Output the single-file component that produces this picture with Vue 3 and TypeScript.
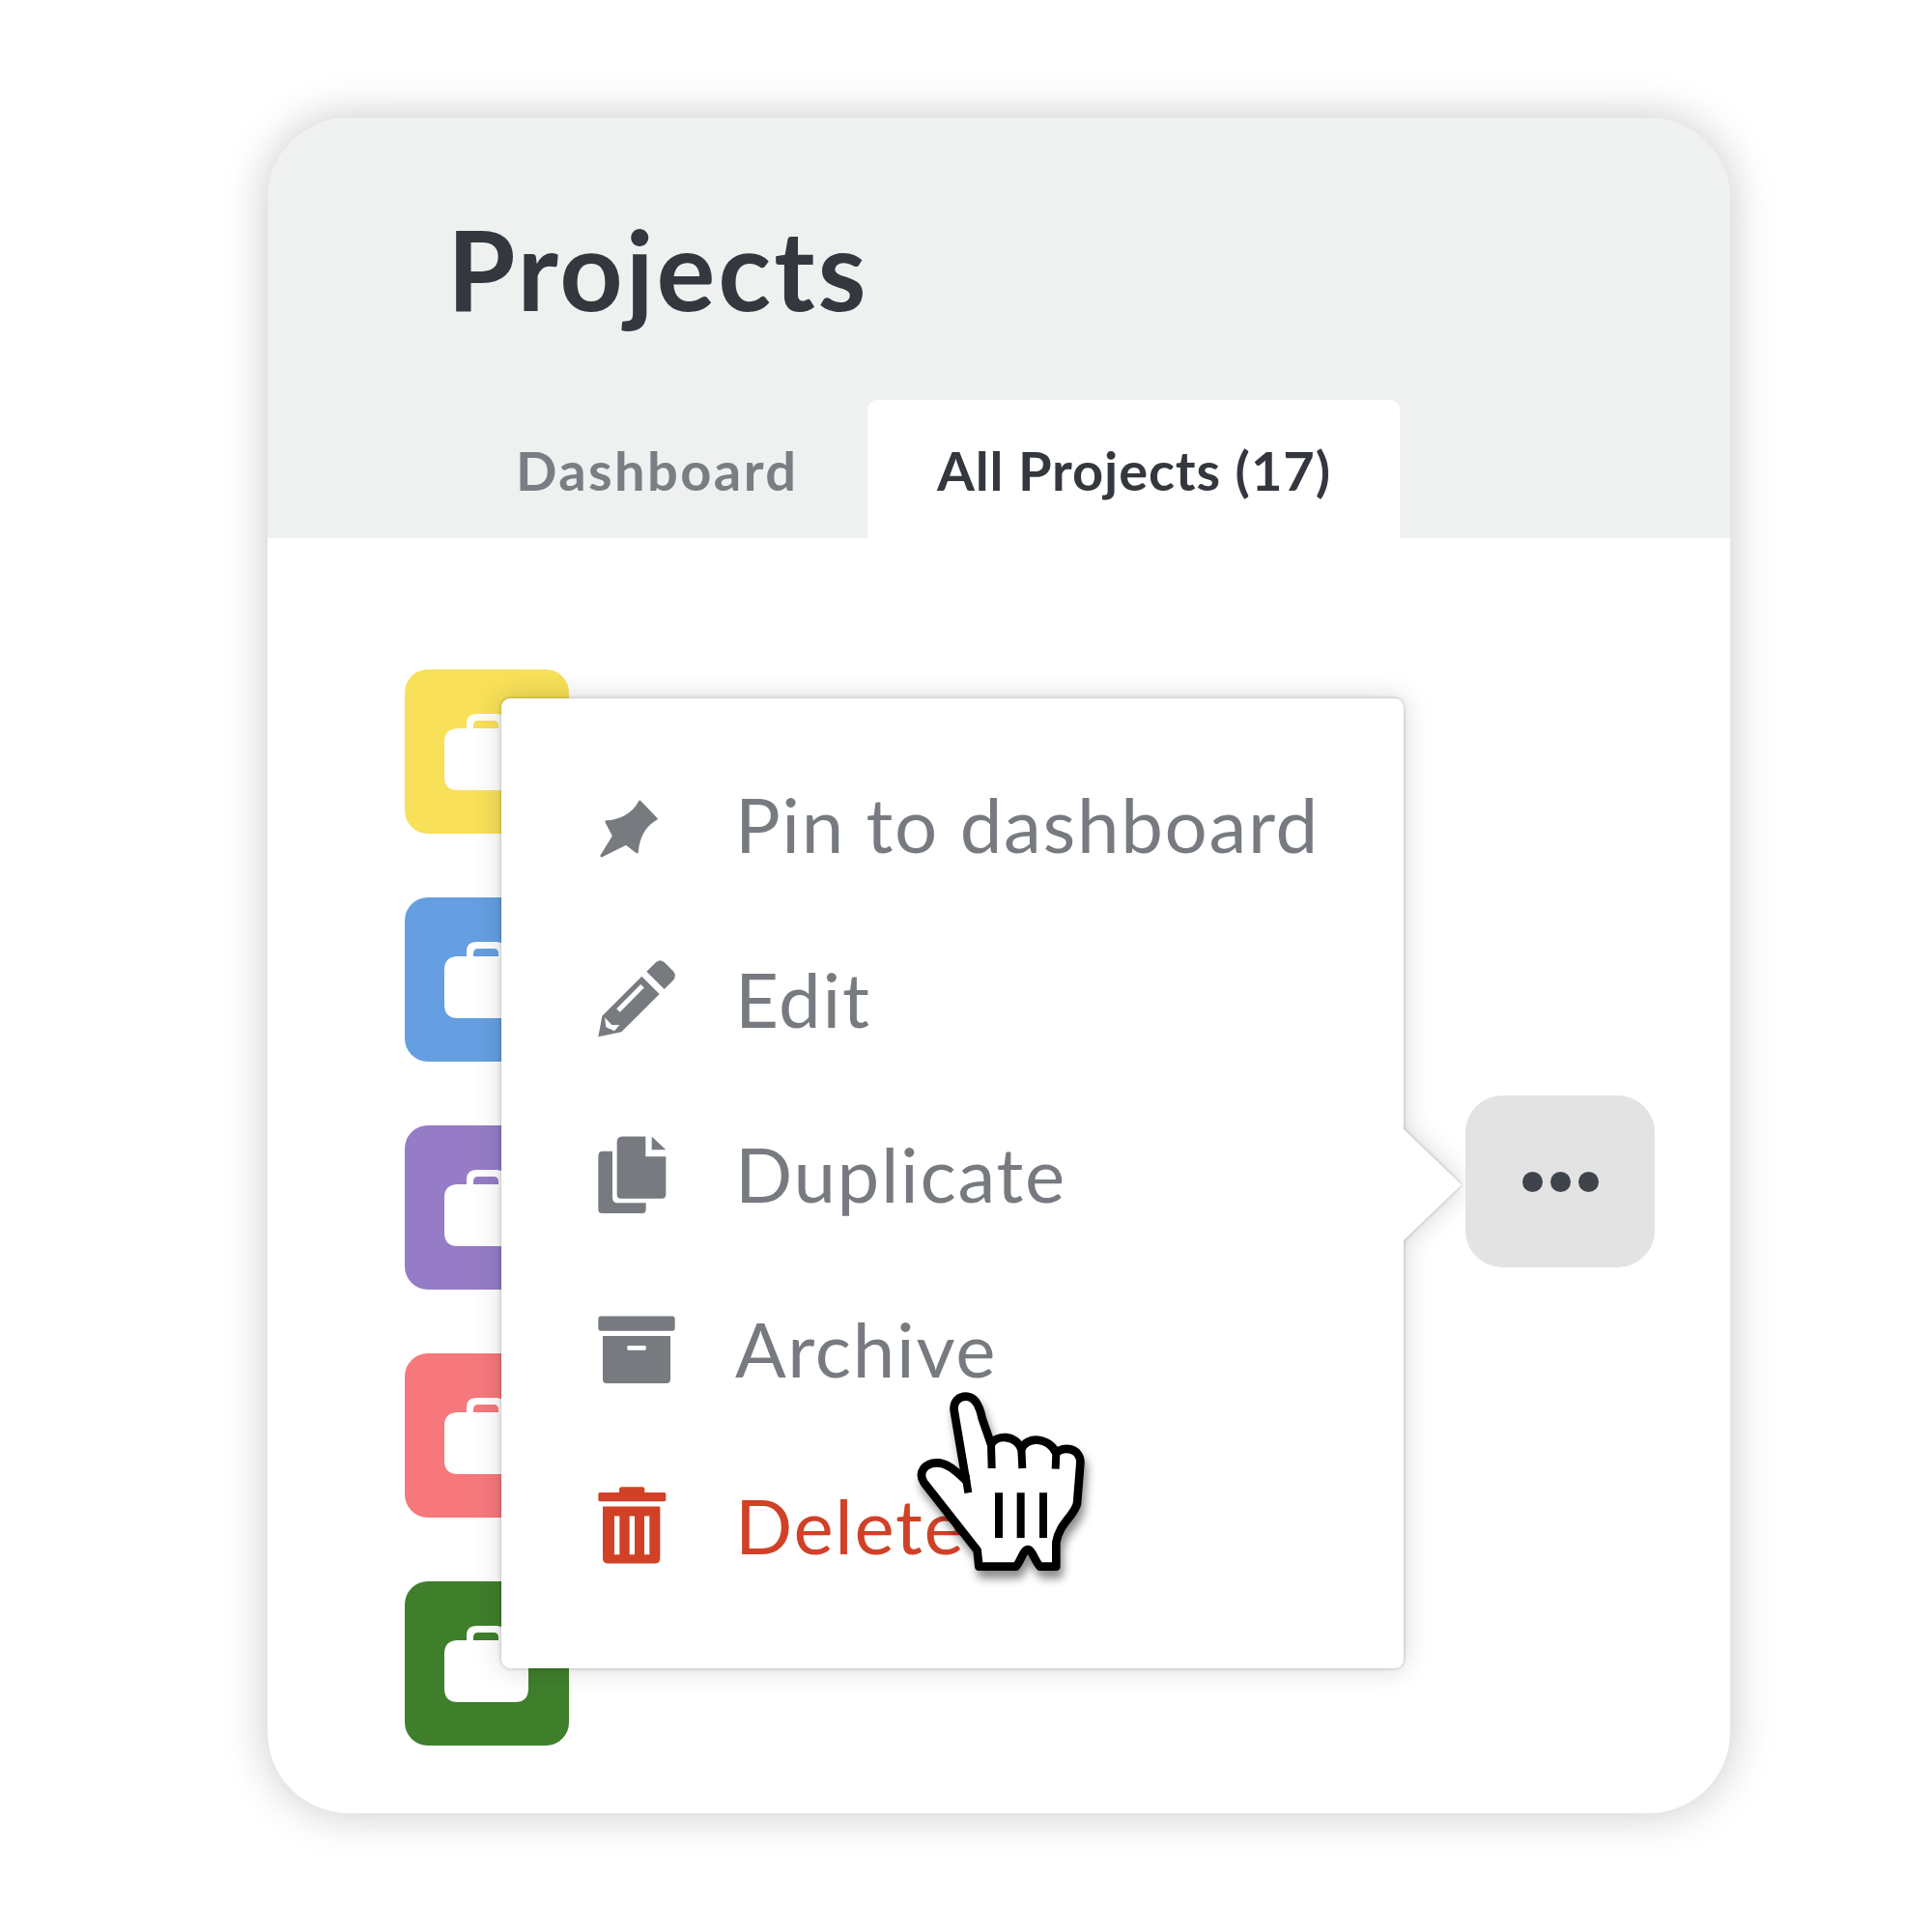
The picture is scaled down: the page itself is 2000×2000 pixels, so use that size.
<script setup lang="ts">
const tiles = ['#f8e058', '#659fe2', '#967cc6', '#f6787c', '#3f7f2c'];
</script>

<template>
  <div class="page">
    <div class="card">
      <header class="head">
        <h1 class="title">Projects</h1>
        <nav class="tabs">
          <div class="tab">Dashboard</div>
          <div class="tab active">All Projects (17)</div>
        </nav>
      </header>

      <div class="list">
        <div v-for="c in tiles" :key="c" class="tile" :style="{ background: c }">
          <svg class="case" viewBox="0 0 87 79">
            <path
              fill="#fff"
              fill-rule="evenodd"
              d="M14 15H23V10Q23 0 33 0H54Q64 0 64 10V15H73Q87 15 87 29V65Q87 79 73 79H14Q0 79 0 65V29Q0 15 14 15ZM30 15H56V12Q56 7 51 7H35Q30 7 30 12Z"
            />
          </svg>
        </div>
      </div>

      <div class="menu">
        <div class="arrow"></div>
        <div class="menu-body">
          <div class="row">
            <svg class="ico" viewBox="657 408 240 240">
              <path d="M668 618L706 556L683 512C722 510 765 492 787 450L838 503C798 525 782 565 778 606L745 580Z" fill="#777b80" stroke="#777b80" stroke-width="8" stroke-linejoin="round" />
            </svg>
            <span>Pin to dashboard</span>
          </div>
          <div class="row">
            <svg class="ico" viewBox="657 951 240 240">
              <path d="M658 1180L670 1115L793 992L848 1047L730 1165Z" fill="#777b80" />
              <path d="M808 977L835 950Q850 935 865 950L890 975Q903 990 890 1005L863 1032Z" fill="#777b80" />
              <path d="M720 1098L795 1022" stroke="#fff" stroke-width="15" />
              <path d="M678 1120L682 1150L708 1162L724 1143L700 1143Z" fill="#fff" />
            </svg>
            <span>Edit</span>
          </div>
          <div class="row">
            <svg class="ico" viewBox="117 360 240 209" preserveAspectRatio="none">
              <path d="M118 410Q118 396 132 396H162V520Q162 536 178 536H266V552Q266 564 254 564H130Q118 564 118 552Z" fill="#777b80" />
              <path d="M176 372Q176 356 192 356H265V410H328V512Q328 524 316 524H188Q176 524 176 512Z" fill="#777b80" />
              <path d="M284 356L328 392H284Z" fill="#777b80" />
            </svg>
            <span>Duplicate</span>
          </div>
          <div class="row">
            <svg class="ico" viewBox="117 833 240 209" preserveAspectRatio="none">
              <rect x="118" y="842" width="238" height="40" rx="8" fill="#777b80" />
              <path d="M132 896H342V1012Q342 1024 330 1024H144Q132 1024 132 1012Z" fill="#777b80" />
              <rect x="208" y="922" width="58" height="12" rx="3" fill="#fff" />
            </svg>
            <span>Archive</span>
          </div>
          <div class="row danger">
            <svg class="ico" viewBox="117 1305 240 209" preserveAspectRatio="none">
              <rect x="118" y="1318" width="210" height="24" rx="5" fill="#d04127" />
              <rect x="183" y="1303" width="79" height="24" rx="8" fill="#d04127" />
              <path d="M132 1356H310V1496Q310 1510 296 1510H146Q132 1510 132 1496Z" fill="#d04127" />
              <rect x="168" y="1382" width="16" height="104" fill="#fff" />
              <rect x="215" y="1382" width="16" height="104" fill="#fff" />
              <rect x="261" y="1382" width="16" height="104" fill="#fff" />
            </svg>
            <span>Delete</span>
          </div>
        </div>
      </div>

      <div class="more">
        <i></i><i></i><i></i>
      </div>

      <svg class="hand" viewBox="0 0 780 780">
        <path
          d="M203 180C200 150 220 137 240 137C268 137 283 170 290 205L318 285C335 255 395 255 412 300C430 260 495 262 520 312C540 290 598 295 595 345L585 470C575 510 530 530 520 590V665H470C455 650 445 612 432 612C418 612 410 650 395 665H280L275 615L110 405C90 375 110 343 150 343C185 343 215 375 240 398Z"
          fill="#fff"
          stroke="#000"
          stroke-width="26"
          stroke-linejoin="round"
        />
        <path d="M318 285L320 360M412 300L415 360M520 312L518 362M238 380L247 436M342 436V576M410 436V576M480 436V576" fill="none" stroke="#000" stroke-width="24" />
      </svg>
    </div>
  </div>
</template>

<style scoped>
.page {
  width: 2000px;
  height: 2000px;
  padding: 122px 0 0 277px;
  box-sizing: border-box;
  background: #fff;
  font-family: Lato, "Liberation Sans", sans-serif;
}

.card {
  position: relative;
  width: 1514px;
  height: 1755px;
  background: #fff;
  border-radius: 84px;
  box-shadow: 0 0 46px rgba(0, 0, 0, 0.22);
}

.head {
  height: 435px;
  background: #eff0f0;
  border-radius: 84px 84px 0 0;
  display: flex;
  flex-direction: column;
  justify-content: space-between;
}

.title {
  margin: 0;
  padding: 88px 0 0 186px;
  font-size: 114px;
  line-height: 136px;
  font-weight: 700;
  letter-spacing: 2.9px;
  color: #34383e;
}

.tabs {
  display: flex;
  height: 143px;
}

.tab {
  display: flex;
  align-items: center;
  width: 621px;
  box-sizing: border-box;
  padding: 2px 0 0 257px;
  font-size: 56px;
  font-weight: 700;
  letter-spacing: 2.4px;
  color: #7a7d82;
}

.tab.active {
  width: 551px;
  padding: 2px 0 0 72px;
  background: #fff;
  border-radius: 10px 10px 0 0;
  letter-spacing: 0.9px;
  color: #34383e;
}

.list {
  display: flex;
  flex-direction: column;
  gap: 66px;
  padding: 136px 0 0 142px;
}

.tile {
  width: 170px;
  height: 170px;
  border-radius: 24px;
  display: flex;
  justify-content: center;
  padding: 46px 2px 0 0;
  box-sizing: border-box;
}

.case {
  width: 87px;
  height: 79px;
}

.menu {
  position: absolute;
  left: 242px;
  top: 601px;
  width: 934px;
  height: 1004px;
  filter: drop-shadow(0 0 2px rgba(0, 0, 0, 0.25)) drop-shadow(0 0 14px rgba(0, 0, 0, 0.16));
}

.menu-body {
  position: relative;
  height: 100%;
  box-sizing: border-box;
  padding: 42px 0 0 100px;
  background: #fff;
  border-radius: 9px;
}

.arrow {
  position: absolute;
  left: 933px;
  top: 445px;
  width: 61px;
  height: 117px;
  background: #fff;
  clip-path: polygon(0 0, 100% 50%, 0 100%);
}

.row {
  display: flex;
  align-items: center;
  gap: 62px;
  height: 181px;
  font-size: 78px;
  letter-spacing: 1.7px;
  color: #777b80;
}

.row span {
  padding-bottom: 6px;
}

.row.danger {
  color: #d04127;
}

.row.danger span {
  padding-bottom: 2px;
}

.ico {
  width: 80px;
  height: 80px;
  flex: none;
  overflow: visible;
}

.more {
  position: absolute;
  left: 1240px;
  top: 1012px;
  width: 196px;
  height: 178px;
  border-radius: 38px;
  background: #e3e3e3;
  display: flex;
  align-items: center;
  justify-content: center;
  gap: 8px;
}

.more i {
  width: 21px;
  height: 21px;
  border-radius: 50%;
  background: #3f444a;
}

.hand {
  position: absolute;
  left: 643px;
  top: 1278px;
  width: 260px;
  height: 260px;
  overflow: visible;
  filter: drop-shadow(3px 8px 5px rgba(0, 0, 0, 0.45));
}
</style>
